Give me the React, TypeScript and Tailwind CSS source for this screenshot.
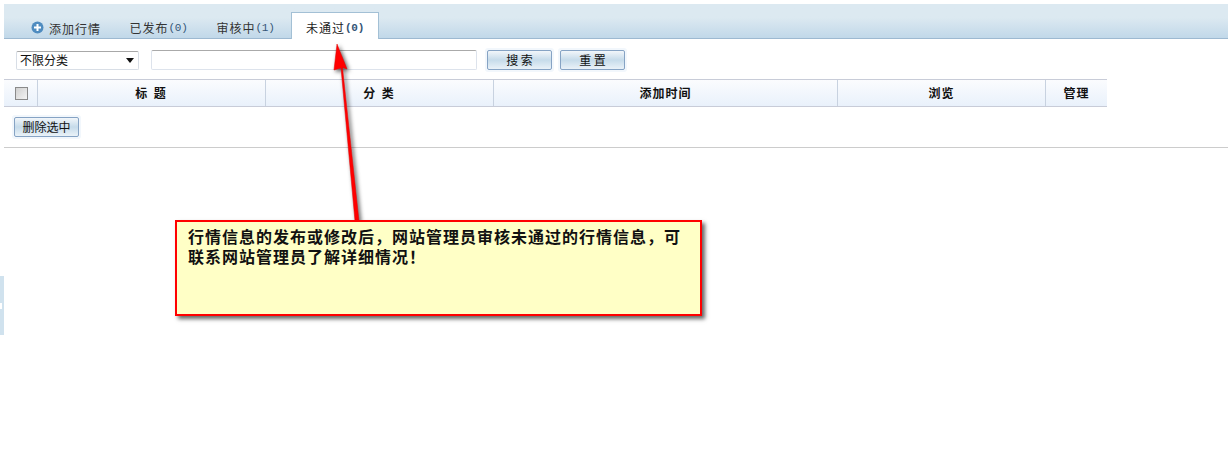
const font = { fontFamily: '"Noto Sans CJK SC", sans-serif' };

function Tab({ label, count }: { label: string; count: string }) {
  return (
    <div className="flex h-[34px] items-center justify-center pt-[12px] text-[12px] tracking-[1px] text-[#333]">
      {label}
      <span className="font-['Liberation_Mono'] text-[11px] leading-[18px] tracking-[-0.2px] text-[#335577]">({count})</span>
    </div>
  );
}

function Btn({ children }: { children: string }) {
  return (
    <div className="rounded-[3px] bg-[#f2f7fc] p-[2px]">
      <div className="flex h-[20px] w-[65px] items-center justify-center rounded-[2px] border border-[#86a3c4] bg-gradient-to-b from-[#f2f6fa] via-[#c6dbea] to-[#eaf2f8] text-[12px] text-[#111]">
        {children}
      </div>
    </div>
  );
}

function Th({ w, children }: { w: string; children?: React.ReactNode }) {
  return (
    <div className={`flex h-full items-center justify-center border-r border-[#c8d2e0] text-[12px] font-bold text-[#111] last:border-r-0 ${w}`}>
      {children}
    </div>
  );
}

export default function App() {
  return (
    <div className="relative h-[462px] w-[1228px] overflow-hidden bg-white" style={font}>
      <div className="pl-[4px] pt-[4px]">
        <div className="flex h-[35px] items-end border-b border-[#9db9d1] bg-gradient-to-b from-[#dce9f1] from-40% to-[#c1d8e9] pl-[27px]">
          <div className="mb-[-1px] flex h-[34px] w-[84px] items-center pt-[13px] text-[12px] tracking-[1px] text-[#333]">
            <svg width="13" height="13" viewBox="0 0 13 13" className="mr-[5px] mt-[-3px] shrink-0">
              <circle cx="6.5" cy="6.5" r="6" fill="#4f8cc0" />
              <path d="M6.5 3v7M3 6.5h7" stroke="#fff" strokeWidth="2" />
            </svg>
            添加行情
          </div>
          <div className="mb-[-1px] w-[87px]"><Tab label="已发布" count="0" /></div>
          <div className="mb-[-1px] w-[87px]"><Tab label="审核中" count="1" /></div>
          <div className="mb-[-1px] ml-[2px] flex h-[27px] w-[88px] items-center justify-center border border-b-0 border-[#a3c0d5] bg-white pt-[3px] text-[12px] tracking-[1px] text-[#222]">
            未通过<span className="font-['Liberation_Mono'] text-[11px] font-bold leading-[18px] tracking-[-0.2px] text-[#335577]">(0)</span>
          </div>
        </div>

        <div className="flex h-[40px] items-center pl-[12px] pt-[1px]">
          <div className="mt-[1px] flex h-[19px] w-[123px] items-center justify-between rounded-[2px] border border-[#d8dee6] border-t-[#a8a8a8] pl-[3px] pr-[4px] text-[12px] text-[#111]">
            不限分类
            <svg width="8" height="5" viewBox="0 0 8 5"><path d="M0 0h8L4 5z" fill="#111" /></svg>
          </div>
          <input className="ml-[12px] h-[20px] w-[326px] rounded-[2px] border border-[#dde3ec] border-t-[#aaa] bg-white outline-none" />
          <div className="ml-[8px]"><Btn>搜 索</Btn></div>
          <div className="ml-[4px]"><Btn>重 置</Btn></div>
        </div>

        <div className="flex h-[28px] w-[1103px] items-center border-y border-[#c8ccd8] bg-gradient-to-b from-[#fbfcfe] to-[#e9f1fb]">
          <Th w="w-[34px]">
            <div className="ml-[1px] h-[13px] w-[13px] border border-[#8a8a8a] bg-gradient-to-br from-[#d0d0d0] to-[#f4f4f4]" />
          </Th>
          <Th w="w-[228px]"><span className="tracking-[2px]">标 题</span></Th>
          <Th w="w-[228px]"><span className="tracking-[2px]">分 类</span></Th>
          <Th w="w-[344px]"><span className="tracking-[1px]">添加时间</span></Th>
          <Th w="w-[208px]"><span className="tracking-[1px]">浏览</span></Th>
          <Th w="w-[61px]"><span className="tracking-[1px]">管理</span></Th>
        </div>

        <div className="flex h-[41px] items-start border-b border-[#cccccc] pl-[8px] pt-[8px]">
          <Btn>删除选中</Btn>
        </div>
      </div>

      {/* left edge handle */}
      <div className="absolute left-0 top-[276px] flex h-[59px] w-[4px] items-center bg-[#d0e2ee]">
        <div className="h-[6px] w-[2px] bg-white" />
      </div>

      {/* annotation arrow */}
      <svg className="absolute left-0 top-0 drop-shadow-[2px_2px_2px_rgba(0,0,0,0.65)]" width="1228" height="462">
        <path d="M337 44L347 69L342.500 67.500L359 221L355 221L341 68L334 70Z" fill="#ff0000" stroke="#e00000" strokeWidth="0.5" />
      </svg>

      {/* annotation callout */}
      <div className="absolute left-[175px] top-[220px] h-[96px] w-[527px] whitespace-nowrap border-2 border-[#ff0000] bg-[#ffffc6] pl-[11px] pt-[4px] text-[16px] font-bold leading-[20px] tracking-[1px] text-[#111] shadow-[3px_3px_4px_rgba(0,0,0,0.6)]">
        行情信息的发布或修改后，网站管理员审核未通过的行情信息，可
        <br />
        联系网站管理员了解详细情况！
      </div>
    </div>
  );
}
